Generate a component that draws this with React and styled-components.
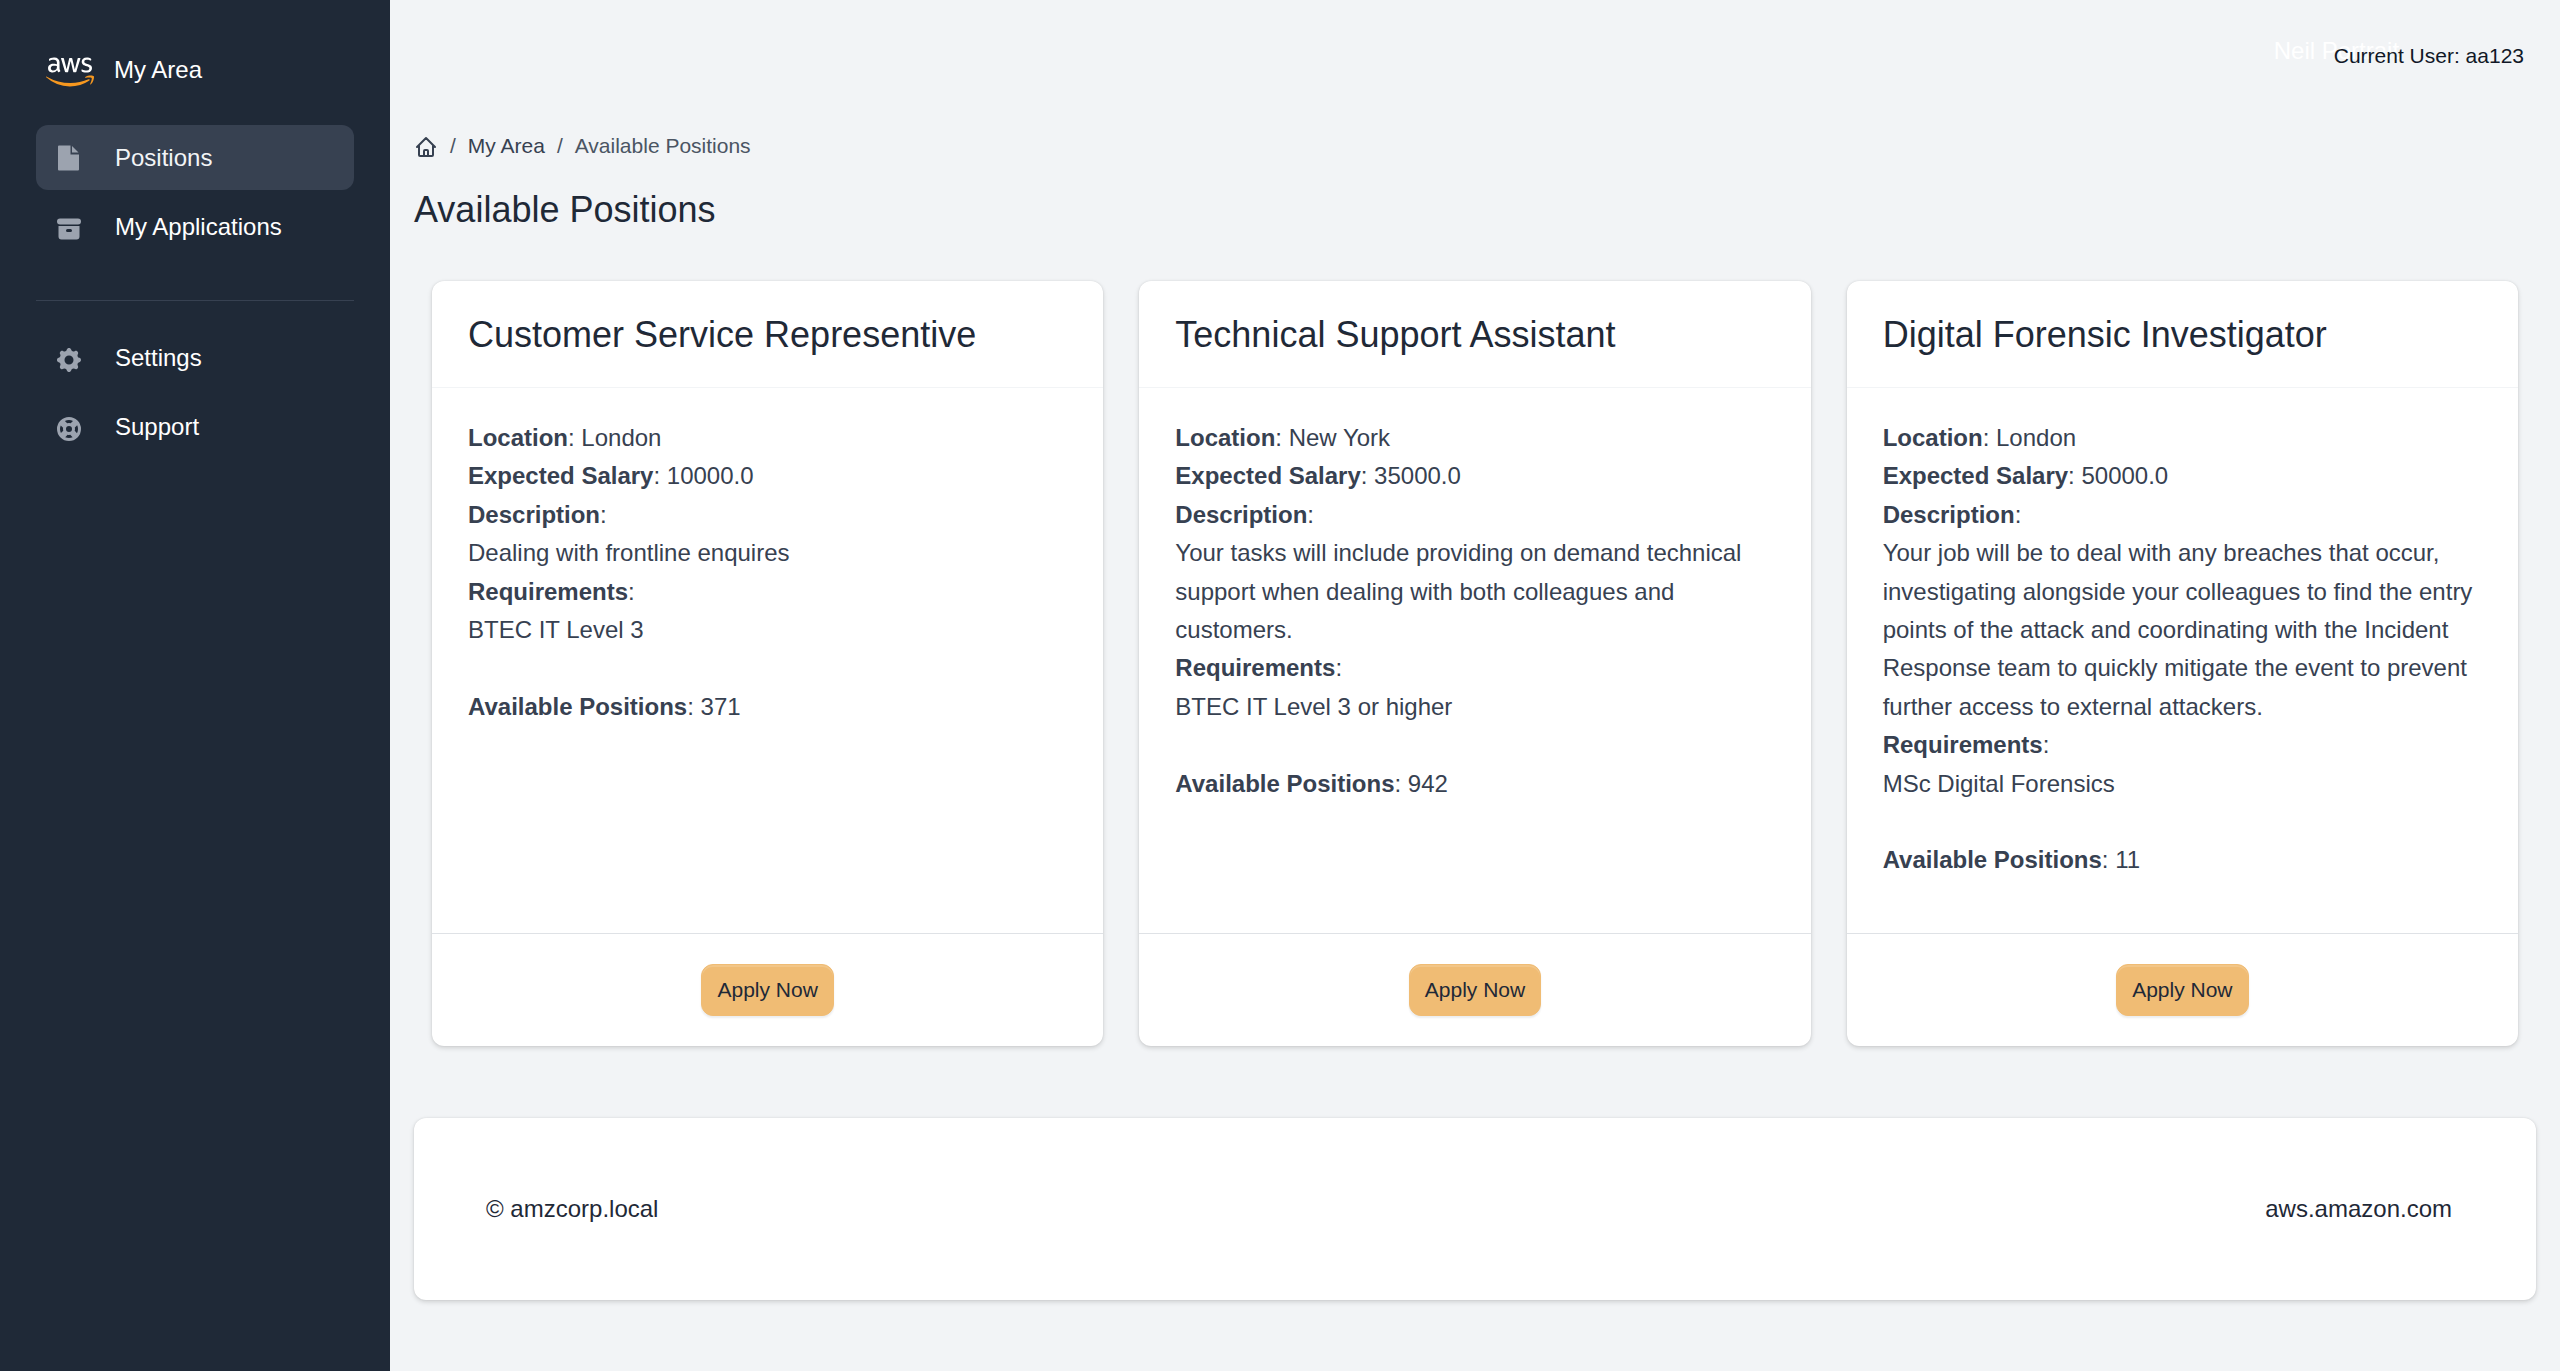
import React from "react";
import styled, { createGlobalStyle } from "styled-components";
import { HiArchive, HiCog, HiSupport, HiOutlineHome } from "react-icons/hi";
import { FaAws } from "react-icons/fa";

const GlobalStyle = createGlobalStyle`
  *, *::before, *::after { box-sizing: border-box; }
  body {
    margin: 0;
    background: #f2f4f6;
    color: #374151;
    font-family: "Liberation Sans", Arial, sans-serif;
    font-size: 24px;
    line-height: 1.6;
  }
  h1, h2, p, ul, ol { margin: 0; padding: 0; }
  ul, ol { list-style: none; }
  a { color: inherit; text-decoration: none; }
`;

const Page = styled.div`
  display: flex;
  min-height: 100vh;
`;

const Sidebar = styled.aside`
  flex: 0 0 390px;
  padding: 48px 36px;
  background: #1f2937;
  color: #fff;
`;

const Brand = styled.a`
  display: flex;
  gap: 20px;
  padding: 0 10px;
  margin-bottom: 29px;
  line-height: 44px;
`;

const BrandMark = styled(FaAws)`
  width: 48px;
  height: 48px;
  path { fill: url(#brand-fill); }
`;

const Defs = styled.svg`
  position: absolute;
  width: 0;
  height: 0;
`;

const NavList = styled.ul`
  display: flex;
  flex-direction: column;
  gap: 4px;
`;

const NavLink = styled.a`
  display: flex;
  align-items: center;
  gap: 31px;
  padding: 13px 18px;
  border-radius: 12px;
  line-height: 39px;
  background: ${({ $active }) => ($active ? "#374151" : "transparent")};
  color: ${({ $active }) => ($active ? "#f2f4f6" : "#fff")};
  svg {
    width: 30px;
    height: 34px;
    padding-top: 4px;
    color: #9ca3af;
  }
`;

const Divider = styled.hr`
  height: 1px;
  margin: 41px 0 24px;
  border: 0;
  background: #374151;
`;

const Main = styled.main`
  flex: 1;
  min-width: 0;
  padding: 32px 24px;
`;

const TopBar = styled.header`
  display: flex;
  justify-content: flex-end;
  align-items: center;
  gap: 12px;
  padding-right: 12px;
  margin-bottom: 49px;
`;

const Avatar = styled.span`
  width: 48px;
  height: 48px;
  line-height: 38px;
  white-space: nowrap;
  color: #fff;
`;

const UserName = styled.span`
  position: relative;
  font-size: 21px;
  line-height: 34px;
  color: #111827;
`;

const Crumbs = styled.ol`
  display: flex;
  align-items: center;
  margin-bottom: 23px;
  font-size: 21px;
  line-height: 34px;
  color: #4b5563;
  li { display: flex; }
  li + li::before {
    content: "/";
    padding: 0 12px;
  }
  a { color: #374151; }
  svg {
    display: block;
    width: 24px;
    height: 26px;
    padding-top: 2px;
  }
`;

const PageTitle = styled.h1`
  margin-bottom: 48px;
  font-size: 36px;
  font-weight: 400;
  line-height: 47px;
  color: #1f2937;
`;

const Panel = styled.section`
  border-radius: 12px;
  background: #fff;
  box-shadow: 0 2px 5px rgba(0, 0, 0, 0.15), 0 0 2px rgba(0, 0, 0, 0.1);
`;

const CardGrid = styled.div`
  display: grid;
  grid-template-columns: repeat(3, minmax(0, 1fr));
  gap: 36px;
  padding: 0 18px;
  margin-bottom: 72px;
`;

const Card = styled(Panel).attrs({ as: "article" })`
  display: flex;
  flex-direction: column;
`;

const CardTitle = styled.h2`
  padding: 30px 36px 29px;
  border-bottom: 1px solid #f2f4f6;
  font-size: 36px;
  font-weight: 400;
  line-height: 47px;
  color: #1f2937;
`;

const CardBody = styled.div`
  flex: 1;
  padding: 31px 36px 53px;
`;

const Spaced = styled.p`
  margin-top: 1.6em;
`;

const CardFooter = styled.div`
  display: flex;
  justify-content: center;
  padding: 30px 36px;
  border-top: 1px solid #dfe2e6;
`;

const ApplyButton = styled.button`
  padding: 8px 15px;
  border: 1px solid #f0bc74;
  border-radius: 12px;
  background: #f0bc74;
  box-shadow: inset 0 2px 0 rgba(255, 255, 255, 0.15), 0 2px 2px rgba(17, 24, 39, 0.08);
  font: inherit;
  font-size: 21px;
  line-height: 34px;
  color: #1f2937;
  cursor: pointer;
`;

const FooterPanel = styled(Panel).attrs({ as: "footer" })`
  display: flex;
  justify-content: space-between;
  padding: 72px 84px 72px 72px;
  color: #1f2937;
`;

function FileIcon() {
  return (
    <svg viewBox="0 0 30 30" fill="currentColor" aria-hidden="true">
      <path d="M5 .5h11.500v9h8.500v15a1 1 0 0 1-1 1H5a1 1 0 0 1-1-1v-23a1 1 0 0 1 1-1z" />
      <path d="M18 1l6.500 6.500H18z" />
    </svg>
  );
}

const positions = [
  {
    title: "Customer Service Representive",
    location: "London",
    salary: "10000.0",
    description: "Dealing with frontline enquires",
    requirements: "BTEC IT Level 3",
    available: 371,
  },
  {
    title: "Technical Support Assistant",
    location: "New York",
    salary: "35000.0",
    description:
      "Your tasks will include providing on demand technical support when dealing with both colleagues and customers.",
    requirements: "BTEC IT Level 3 or higher",
    available: 942,
  },
  {
    title: "Digital Forensic Investigator",
    location: "London",
    salary: "50000.0",
    description:
      "Your job will be to deal with any breaches that occur, investigating alongside your colleagues to find the entry points of the attack and coordinating with the Incident Response team to quickly mitigate the event to prevent further access to external attackers.",
    requirements: "MSc Digital Forensics",
    available: 11,
  },
];

function PositionCard({ position }) {
  return (
    <Card>
      <CardTitle>{position.title}</CardTitle>
      <CardBody>
        <p><strong>Location</strong>: {position.location}</p>
        <p><strong>Expected Salary</strong>: {position.salary}</p>
        <p><strong>Description</strong>:</p>
        <p>{position.description}</p>
        <p><strong>Requirements</strong>:</p>
        <p>{position.requirements}</p>
        <Spaced><strong>Available Positions</strong>: {position.available}</Spaced>
      </CardBody>
      <CardFooter>
        <ApplyButton type="button">Apply Now</ApplyButton>
      </CardFooter>
    </Card>
  );
}

export default function App() {
  return (
    <Page>
      <GlobalStyle />
      <Defs aria-hidden="true">
        <linearGradient id="brand-fill" gradientUnits="userSpaceOnUse" x1="0" y1="0" x2="0" y2="512">
          <stop offset="0.56" stopColor="#fff" />
          <stop offset="0.56" stopColor="#f7981f" />
        </linearGradient>
      </Defs>
      <Sidebar>
        <Brand href="#">
          <BrandMark aria-hidden="true" />
          <span>My Area</span>
        </Brand>
        <nav>
          <NavList>
            <li><NavLink href="#positions" $active><FileIcon />Positions</NavLink></li>
            <li><NavLink href="#applications"><HiArchive />My Applications</NavLink></li>
          </NavList>
          <Divider />
          <NavList>
            <li><NavLink href="#settings"><HiCog />Settings</NavLink></li>
            <li><NavLink href="#support"><HiSupport />Support</NavLink></li>
          </NavList>
        </nav>
      </Sidebar>
      <Main>
        <TopBar>
          <Avatar>Neil Portrait</Avatar>
          <UserName>Current User: aa123</UserName>
        </TopBar>
        <nav aria-label="Breadcrumb">
          <Crumbs>
            <li><a href="#" aria-label="Home"><HiOutlineHome /></a></li>
            <li><a href="#area">My Area</a></li>
            <li>Available Positions</li>
          </Crumbs>
        </nav>
        <PageTitle>Available Positions</PageTitle>
        <CardGrid>
          {positions.map((position) => (
            <PositionCard key={position.title} position={position} />
          ))}
        </CardGrid>
        <FooterPanel>
          <p>© amzcorp.local</p>
          <a href="#aws">aws.amazon.com</a>
        </FooterPanel>
      </Main>
    </Page>
  );
}
